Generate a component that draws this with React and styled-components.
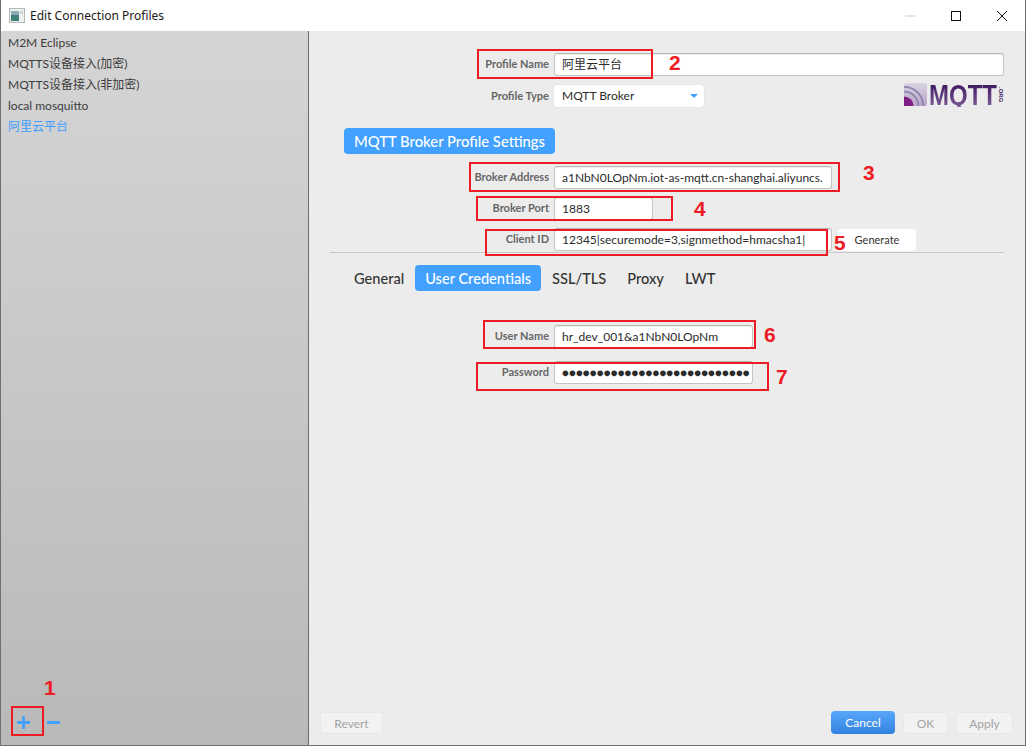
import React from "react";
import styled, { createGlobalStyle } from "styled-components";
import { FaPlus, FaMinus } from "react-icons/fa";

const GlobalStyle = createGlobalStyle`
  html, body {
    margin: 0;
    padding: 0;
    background: #ececec;
  }
  * {
    box-sizing: border-box;
  }
`;

const profiles = ["M2M Eclipse", "MQTTS设备接入(加密)", "MQTTS设备接入(非加密)", "local mosquitto", "阿里云平台"];
const tabs = ["General", "User Credentials", "SSL/TLS", "Proxy", "LWT"];

const marks = [
  { x: 10, y: 706, w: 33, h: 30, num: "1", nx: 43, ny: 676 },
  { x: 476, y: 49, w: 176, h: 30, num: "2", nx: 668, ny: 51 },
  { x: 468, y: 162, w: 371, h: 30, num: "3", nx: 862, ny: 161 },
  { x: 475, y: 196, w: 197, h: 25, num: "4", nx: 693, ny: 197 },
  { x: 484, y: 229, w: 343, h: 27, num: "5", nx: 833, ny: 231 },
  { x: 482, y: 320, w: 273, h: 29, num: "6", nx: 763, ny: 323 },
  { x: 475, y: 362, w: 293, h: 29, num: "7", nx: 775, ny: 365 },
];

const App = () => {
  return (
    <Window>
      <GlobalStyle />
      <TitleBar>
        <TitleIcon viewBox="0 0 16 15">
          <rect x="0.5" y="0.5" width="15" height="14" fill="#eef0f0" stroke="#b5b8b8" />
          <rect x="2" y="3" width="8" height="10" fill="#3f7f78" />
          <rect x="2" y="3" width="8" height="4" fill="#8fa9b5" />
          <rect x="11" y="3" width="3" height="3" fill="#c9d4d6" />
        </TitleIcon>
        <TitleText>Edit Connection Profiles</TitleText>
        <WindowControls>
          <ControlIcon viewBox="0 0 12 12" $faded>
            <path d="M1 6h10" />
          </ControlIcon>
          <ControlIcon viewBox="0 0 12 12">
            <rect x="1.5" y="1.5" width="9" height="9" />
          </ControlIcon>
          <ControlIcon viewBox="0 0 12 12">
            <path d="M1 1l10 10M11 1L1 11" />
          </ControlIcon>
        </WindowControls>
      </TitleBar>

      <Body>
        <Sidebar>
          <ProfileList>
            {profiles.map((name, i) => (
              <ProfileItem key={name} $active={i === profiles.length - 1}>{name}</ProfileItem>
            ))}
          </ProfileList>
          <SideActions>
            <FaPlus />
            <FaMinus />
          </SideActions>
        </Sidebar>

        <Main>
          <FormRow $top={22}>
            <Label>Profile Name</Label>
            <Field $grow $cjk>阿里云平台</Field>
          </FormRow>
          <TypeRow>
            <Label>Profile Type</Label>
            <Select>
              MQTT Broker
              <Caret />
            </Select>
            <Logo>
              <LogoIcon viewBox="0 0 24 24">
                <defs>
                  <linearGradient id="logoBg" x1="0" y1="0" x2="0" y2="1">
                    <stop offset="0" stopColor="#d8d3e2" />
                    <stop offset="1" stopColor="#b9a4c9" />
                  </linearGradient>
                </defs>
                <rect width="24" height="24" rx="2" fill="url(#logoBg)" />
                <path d="M0 24V14a10 10 0 0 1 10 10z" fill="#7f1f83" />
                <path d="M0 9a15 15 0 0 1 15 15M0 4a20 20 0 0 1 20 20" fill="none" stroke="#8f84ae" strokeWidth="2" />
              </LogoIcon>
              <LogoWord>MQTT</LogoWord>
              <LogoOrg>.ORG</LogoOrg>
            </Logo>
          </TypeRow>

          <SectionBadge>MQTT Broker Profile Settings</SectionBadge>

          <FormRow $top={12}>
            <Label>Broker Address</Label>
            <Field $width={278}>a1NbN0LOpNm.iot-as-mqtt.cn-shanghai.aliyuncs.</Field>
          </FormRow>
          <FormRow $top={8}>
            <Label>Broker Port</Label>
            <Field $width={99}>1883</Field>
          </FormRow>
          <FormRow $top={8}>
            <Label>Client ID</Label>
            <Field $width={278}>12345|securemode=3,signmethod=hmacsha1|</Field>
            <PlainButton>Generate</PlainButton>
          </FormRow>

          <Divider />

          <TabBar>
            {tabs.map((tab, i) => (
              <Tab key={tab} $active={i === 1}>{tab}</Tab>
            ))}
          </TabBar>

          <FormRow $top={34}>
            <Label>User Name</Label>
            <Field $width={199}>hr_dev_001&amp;a1NbN0LOpNm</Field>
          </FormRow>
          <FormRow $top={13}>
            <Label>Password</Label>
            <Field $width={199} $secret>●●●●●●●●●●●●●●●●●●●●●●●●●●●</Field>
          </FormRow>

          <Footer>
            <DisabledButton $width={63}>Revert</DisabledButton>
            <FooterRight>
              <CancelButton>Cancel</CancelButton>
              <DisabledButton $width={45}>OK</DisabledButton>
              <DisabledButton $width={57}>Apply</DisabledButton>
            </FooterRight>
          </Footer>
        </Main>
      </Body>

      {marks.map((m) => (
        <React.Fragment key={m.num}>
          <MarkBox style={{ left: m.x, top: m.y, width: m.w, height: m.h }} />
          <MarkNumber style={{ left: m.nx, top: m.ny }}>{m.num}</MarkNumber>
        </React.Fragment>
      ))}
    </Window>
  );
};

const Window = styled.div`
  position: relative;
  width: 1026px;
  height: 746px;
  display: flex;
  flex-direction: column;
  overflow: hidden;
  background: #ececec;
  border-left: 1px solid #6f6f6f;
  border-right: 1px solid #6f6f6f;
  border-bottom: 1px solid #6f6f6f;
  font-family: Lato, "Noto Sans CJK SC", sans-serif;
`;

const TitleBar = styled.div`
  height: 31px;
  flex: none;
  display: flex;
  align-items: center;
  padding-left: 8px;
  background: #fff;
`;

const TitleIcon = styled.svg`
  width: 16px;
  height: 15px;
  margin-right: 5px;
`;

const TitleText = styled.span`
  font-family: "Noto Sans", sans-serif;
  font-size: 12px;
  color: #1a1a1a;
`;

const WindowControls = styled.div`
  margin-left: auto;
  display: flex;
  align-items: center;
  gap: 34px;
  padding-right: 17px;
`;

const ControlIcon = styled.svg`
  width: 12px;
  height: 12px;
  fill: none;
  stroke: ${(props) => (props.$faded ? "#c4c4c4" : "#111")};
  stroke-width: 1;
`;

const Body = styled.div`
  flex: 1;
  min-height: 0;
  display: flex;
`;

const Sidebar = styled.div`
  width: 308px;
  flex: none;
  display: flex;
  flex-direction: column;
  justify-content: space-between;
  background: linear-gradient(#d5d5d5, #b9b9b9);
  border-right: 1px solid #6d6d6d;
`;

const ProfileList = styled.div`
  display: flex;
  flex-direction: column;
  padding: 0.5px 0 0 7px;
`;

const ProfileItem = styled.div`
  height: 21px;
  line-height: 21px;
  font-size: 12px;
  color: ${(props) => (props.$active ? "#3f9eff" : "#3c3c3c")};
`;

const SideActions = styled.div`
  display: flex;
  align-items: center;
  gap: 15px;
  padding: 0 0 15px 15px;
  color: #42a0ff;
  font-size: 15px;
`;

const Main = styled.div`
  flex: 1;
  min-width: 0;
  display: flex;
  flex-direction: column;
  padding-right: 12px;
`;

const FormRow = styled.div`
  display: flex;
  align-items: center;
  margin-top: ${(props) => props.$top || 0}px;
  padding-right: 9px;
`;

const TypeRow = styled(FormRow)`
  margin-top: 9px;
`;

const Label = styled.div`
  width: 240px;
  flex: none;
  margin-right: 5px;
  padding-bottom: 2px;
  text-align: right;
  font-size: 11px;
  font-weight: 700;
  color: #666;
`;

const Field = styled.div`
  height: 23px;
  line-height: 21px;
  padding: 0 7px;
  overflow: hidden;
  white-space: nowrap;
  flex: ${(props) => (props.$grow ? 1 : "none")};
  width: ${(props) => (props.$width ? `${props.$width}px` : "auto")};
  background: #fff;
  border: 1px solid #c4c4c4;
  border-top-color: #b5b5b5;
  border-radius: 3px;
  box-shadow: inset 0 1px 1px #eee;
  color: #2b2b2b;
  font-size: ${(props) => (props.$secret ? "11.6px" : "12px")};
`;

const Select = styled.div`
  position: relative;
  width: 150px;
  height: 22px;
  line-height: 21px;
  padding-left: 8px;
  background: #fff;
  border-radius: 3px;
  box-shadow: 0 0 1px #bdbdbd;
  font-size: 12px;
  color: #2b2b2b;
`;

const Caret = styled.span`
  position: absolute;
  right: 6px;
  top: 9px;
  border-left: 4px solid transparent;
  border-right: 4px solid transparent;
  border-top: 4px solid #42a0ff;
`;

const Logo = styled.div`
  margin-left: auto;
  margin-top: -3px;
  display: flex;
  align-items: center;
  height: 24px;
`;

const LogoIcon = styled.svg`
  width: 23px;
  height: 23px;
  margin-right: 2px;
`;

const LogoWord = styled.span`
  display: inline-block;
  width: 86px;
  margin-right: -17px;
  font-family: "Liberation Sans", sans-serif;
  font-size: 30px;
  font-weight: 700;
  line-height: 24px;
  transform: scaleX(0.8);
  transform-origin: left center;
  background: linear-gradient(#3b1660, #7b5a93);
  -webkit-background-clip: text;
  background-clip: text;
  color: transparent;
`;

const LogoOrg = styled.span`
  writing-mode: vertical-rl;
  font-family: "Liberation Sans", sans-serif;
  font-size: 6px;
  font-weight: 700;
  color: #3b1660;
`;

const SectionBadge = styled.div`
  align-self: flex-start;
  margin: 21px 0 0 35px;
  width: 211px;
  height: 26px;
  line-height: 26px;
  text-align: center;
  background: #42a0ff;
  border-radius: 4px;
  color: #fff;
  font-size: 14.8px;
  font-weight: 500;
`;

const PlainButton = styled.div`
  width: 78px;
  height: 22px;
  line-height: 22px;
  margin-left: 6px;
  text-align: center;
  background: #fff;
  border-radius: 3px;
  font-size: 11px;
  color: #333;
`;

const Divider = styled.div`
  height: 1px;
  margin: 1px 9px 0 21px;
  background: #c8c8c8;
`;

const TabBar = styled.div`
  display: flex;
  align-items: center;
  gap: 1px;
  margin: 12px 0 0 35px;
`;

const Tab = styled.div`
  height: 26px;
  line-height: 27px;
  padding: 0 10px;
  border-radius: 4px;
  font-size: 14.6px;
  font-weight: 500;
  background: ${(props) => (props.$active ? "#42a0ff" : "transparent")};
  color: ${(props) => (props.$active ? "#fff" : "#333")};
`;

const Footer = styled.div`
  margin-top: auto;
  display: flex;
  align-items: center;
  justify-content: space-between;
  padding: 0 0 11px 11px;
`;

const FooterRight = styled.div`
  display: flex;
  align-items: center;
  gap: 8px;
`;

const DisabledButton = styled.div`
  width: ${(props) => props.$width}px;
  height: 22px;
  line-height: 22px;
  text-align: center;
  background: #f2f2f2;
  border: 1px solid #e8e8e8;
  border-radius: 3px;
  font-size: 12px;
  color: #a4a4a4;
`;

const CancelButton = styled.div`
  width: 64px;
  height: 23px;
  line-height: 23px;
  text-align: center;
  background: linear-gradient(#58a7fb, #3282e0);
  border-radius: 4px;
  font-size: 12px;
  color: #fff;
`;

const MarkBox = styled.div`
  position: absolute;
  border: 2px solid #ed1c24;
  pointer-events: none;
`;

const MarkNumber = styled.span`
  position: absolute;
  font-family: "Liberation Sans", sans-serif;
  font-size: 21px;
  font-weight: 700;
  line-height: 24px;
  color: #ed1c24;
`;

export default App;
